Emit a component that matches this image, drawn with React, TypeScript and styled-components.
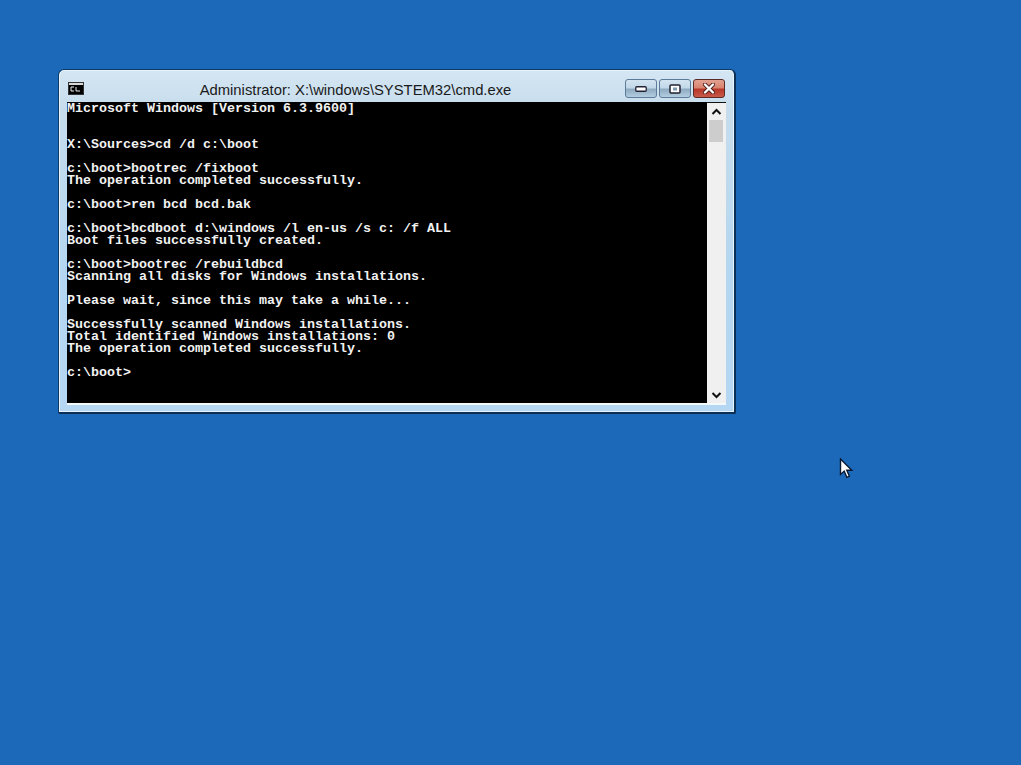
import React from "react";
import styled, { createGlobalStyle } from "styled-components";

const GlobalStyle = createGlobalStyle`
  html, body {
    margin: 0;
    padding: 0;
    height: 100%;
    background: #1c69b9;
    overflow: hidden;
  }
`;

const Desktop = styled.div`
  position: relative;
  width: 1021px;
  height: 765px;
  background: #1c69b9;
`;

const Window = styled.div`
  position: absolute;
  left: 58px;
  top: 69px;
  width: 678px;
  height: 345px;
  box-sizing: border-box;
  display: flex;
  flex-direction: column;
  padding: 0 8px 7px 8px;
  border: 1px solid #0c3a66;
  border-right: 2px solid #0b2f55;
  border-bottom: 2px solid #0b2f55;
  border-radius: 6px 6px 2px 2px;
  background: linear-gradient(180deg, #d5e6f3 0%, #c6dcec 12%, #b4d6f0 60%, #b5d7f3 100%);
  box-shadow: inset 0 0 0 1px #e8f3fb;
`;

const TitleBar = styled.div`
  position: relative;
  flex: none;
  height: 32px;
  display: flex;
  align-items: center;
  justify-content: center;
`;

const AppIcon = styled.svg`
  position: absolute;
  left: 1px;
  top: 12px;
`;

const Title = styled.div`
  font-family: "Liberation Sans", Arial, sans-serif;
  font-size: 14.8px;
  color: #1a1a1a;
  white-space: nowrap;
  padding-top: 8px;
  margin-right: 82px;
`;

const Controls = styled.div`
  position: absolute;
  right: 1px;
  top: 9px;
  display: flex;
  gap: 2px;
`;

const ControlButton = styled.div<{ $close?: boolean }>`
  width: 32px;
  height: 19px;
  box-sizing: border-box;
  display: flex;
  align-items: center;
  justify-content: center;
  border: 1px solid ${(p) => (p.$close ? "#5a2a26" : "#5c7b98")};
  border-radius: 3px;
  background: ${(p) =>
    p.$close
      ? "linear-gradient(180deg, #e3a191 0%, #d98471 45%, #b8382a 55%, #c9594a 100%)"
      : "linear-gradient(180deg, #d3e4f1 0%, #c2d8e9 45%, #8fabc2 55%, #b4cde0 100%)"};
`;

const Body = styled.div`
  flex: 1;
  min-height: 0;
  display: flex;
  border-bottom: 2px solid #f4f9fd;
`;

const Terminal = styled.pre`
  flex: 1;
  margin: 0;
  padding-top: 1px;
  background: #000;
  color: #f2f2f2;
  font-family: "Liberation Mono", "Courier New", monospace;
  font-size: 13.33px;
  font-weight: 700;
  line-height: 12px;
`;

const ScrollBar = styled.div`
  flex: none;
  width: 19px;
  display: flex;
  flex-direction: column;
  background: #f0f0f0;
  border-top: 1px solid #111;
`;

const ScrollArrow = styled.div`
  flex: none;
  height: 17px;
  display: flex;
  align-items: center;
  justify-content: center;
`;

const ScrollThumb = styled.div`
  flex: none;
  width: 14px;
  height: 22px;
  margin-left: 2px;
  background: #cdcdcd;
`;

const ScrollTrack = styled.div`
  flex: 1;
`;

const Cursor = styled.svg`
  position: absolute;
  left: 839px;
  top: 458px;
`;

const output = `Microsoft Windows [Version 6.3.9600]


X:\\Sources>cd /d c:\\boot

c:\\boot>bootrec /fixboot
The operation completed successfully.

c:\\boot>ren bcd bcd.bak

c:\\boot>bcdboot d:\\windows /l en-us /s c: /f ALL
Boot files successfully created.

c:\\boot>bootrec /rebuildbcd
Scanning all disks for Windows installations.

Please wait, since this may take a while...

Successfully scanned Windows installations.
Total identified Windows installations: 0
The operation completed successfully.

c:\\boot>`;

const App = () => {
  return (
    <>
      <GlobalStyle />
      <Desktop>
        <Window>
          <TitleBar>
            <AppIcon width="16" height="13" viewBox="0 0 16 13">
              <rect x="0.5" y="0.5" width="15" height="12" fill="#d8d8d8" stroke="#333" />
              <rect x="1" y="3" width="14" height="9" fill="#000" />
              <path d="M3 5h3M3 5v4M3 9h3M8 5v4h4" stroke="#eee" strokeWidth="1" fill="none" />
            </AppIcon>
            <Title>Administrator: X:\windows\SYSTEM32\cmd.exe</Title>
            <Controls>
              <ControlButton>
                <svg width="12" height="6" viewBox="0 0 12 6">
                  <rect x="0.75" y="0.75" width="10.5" height="4.5" rx="1" fill="#fff" stroke="#223" strokeWidth="1.3" />
                </svg>
              </ControlButton>
              <ControlButton>
                <svg width="12" height="10" viewBox="0 0 12 10">
                  <rect x="1" y="1" width="10" height="8" rx="1" fill="#fff" stroke="#223" strokeWidth="1.5" />
                  <rect x="4" y="3.5" width="4" height="3" fill="#7e98ae" />
                </svg>
              </ControlButton>
              <ControlButton $close>
                <svg width="14" height="11" viewBox="0 0 14 11">
                  <path d="M3 1.5l8 8M11 1.5l-8 8" stroke="#4a1c18" strokeWidth="4" strokeLinecap="round" />
                  <path d="M3 1.5l8 8M11 1.5l-8 8" stroke="#fff" strokeWidth="2.4" strokeLinecap="round" />
                </svg>
              </ControlButton>
            </Controls>
          </TitleBar>
          <Body>
            <Terminal>{output}</Terminal>
            <ScrollBar>
              <ScrollArrow>
                <svg width="11" height="8" viewBox="0 0 11 8">
                  <path d="M1.5 6l4-4 4 4" stroke="#111" strokeWidth="2" fill="none" />
                </svg>
              </ScrollArrow>
              <ScrollThumb />
              <ScrollTrack />
              <ScrollArrow>
                <svg width="11" height="8" viewBox="0 0 11 8">
                  <path d="M1.5 2l4 4 4-4" stroke="#111" strokeWidth="2" fill="none" />
                </svg>
              </ScrollArrow>
            </ScrollBar>
          </Body>
        </Window>
        <Cursor width="16" height="22" viewBox="0 0 16 22">
          <path
            d="M1.5 1v15.5l3.7-3.4 2.6 6.2 2.6-1.1-2.6-6h5z"
            fill="#fff"
            stroke="#0a1a33"
            strokeWidth="1.4"
          />
        </Cursor>
      </Desktop>
    </>
  );
};

export default App;
